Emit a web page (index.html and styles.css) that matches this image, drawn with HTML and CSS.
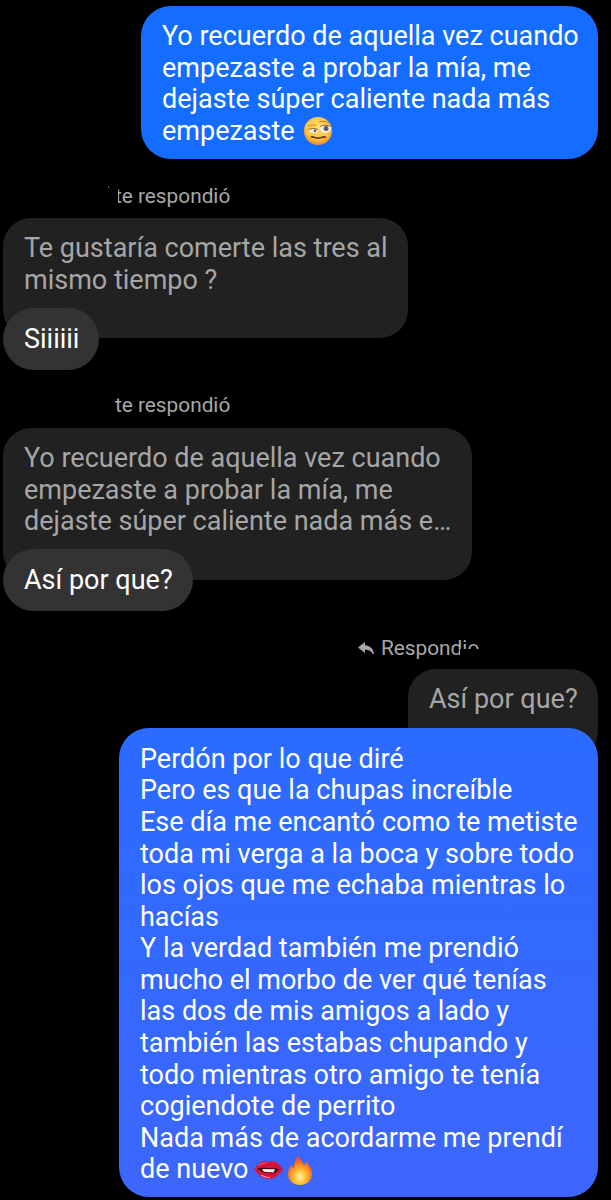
FILE: index.html
```html
<!DOCTYPE html>
<html lang="es">
<head>
<meta charset="UTF-8">
<meta name="viewport" content="width=device-width, initial-scale=1.0">
<title>Chat</title>
<link rel="stylesheet" href="styles.css">
</head>
<body>

<div class="chat">

    <!-- Sent message -->
    <div class="bubble sent first">
        Yo recuerdo de aquella vez cuando<br>
        empezaste a probar la mía, me<br>
        dejaste súper caliente nada más<br>
        empezaste
        <svg class="emoji woozy" viewBox="0 0 28 28">
            <defs>
                <radialGradient id="face" cx="50%" cy="38%" r="62%">
                    <stop offset="0" stop-color="#ffe070"/>
                    <stop offset="0.7" stop-color="#fdc143"/>
                    <stop offset="1" stop-color="#ee8a1e"/>
                </radialGradient>
            </defs>
            <circle cx="14" cy="14" r="14" fill="url(#face)"/>
            <path d="M4.500 9c2.500-1.200 5-1.200 7.500-.5" fill="none" stroke="#c07a28" stroke-width="1"/>
            <path d="M15 5c3.500-1.300 7-1 10 1" fill="none" stroke="#c07a28" stroke-width="1"/>
            <path d="M4.500 12.500c3-1.200 7-1.200 9.500 0 0 2-2 3.500-4.700 3.500s-4.800-1.500-4.800-3.500z" fill="#f4f1ea"/>
            <path d="M4.500 12.500c3-1.200 7-1.200 9.500 0" fill="none" stroke="#7a4d1e" stroke-width=".9"/>
            <circle cx="11" cy="13.800" r="1.300" fill="#6b5440"/>
            <path d="M16 9.500c3-1.500 8-1.500 11 0 .5 3.500-2 6.500-5.500 6.500S15.500 13 16 9.500z" fill="#f4f1ea"/>
            <path d="M16 9.500c3-1.500 8-1.500 11 0" fill="none" stroke="#7a4d1e" stroke-width=".8"/>
            <circle cx="22" cy="11.500" r="2.500" fill="#5d5d66"/>
            <path d="M7 20.200c2.500-1.300 4.500 1.400 7.500 1s4.500-2 7.500-1" fill="none" stroke="#6b3410" stroke-width="1.700"/>
        </svg>
    </div>

    <!-- Reply 1 -->
    <div class="reply-label left first-label"><span class="name-cut"></span>te respondió</div>
    <div class="quote left short">
        Te gustaría comerte las tres al<br>
        mismo tiempo ?
    </div>
    <div class="pill">Siiiiii</div>

    <!-- Reply 2 -->
    <div class="reply-label left">te respondió</div>
    <div class="quote left long">
        Yo recuerdo de aquella vez cuando<br>
        empezaste a probar la mía, me<br>
        dejaste súper caliente nada más e…
    </div>
    <div class="pill wide">Así por que?</div>

    <!-- Own reply -->
    <div class="reply-label right">
        <svg class="reply-icon" viewBox="0 0 16 12">
            <path d="M7 0L0 5.500 7 11V7.800c3.500 0 6 .8 7.700 4.200h1.300C15.500 7.500 12.500 3.800 7 3.300z" fill="#a8a8a8"/>
        </svg>
        <span class="clipped">Respondió<span class="word-cut"></span></span>
    </div>
    <div class="quote right own">Así por que?</div>
    <div class="bubble sent last">
        Perdón por lo que diré<br>
        Pero es que la chupas increíble<br>
        Ese día me encantó como te metiste<br>
        toda mi verga a la boca y sobre todo<br>
        los ojos que me echaba mientras lo<br>
        hacías<br>
        Y la verdad también me prendió<br>
        mucho el morbo de ver qué tenías<br>
        las dos de mis amigos a lado y<br>
        también las estabas chupando y<br>
        todo mientras otro amigo te tenía<br>
        cogiendote de perrito<br>
        Nada más de acordarme me prendí<br>
        de nuevo
        <svg class="emoji lips" viewBox="0 0 29 18">
            <path d="M0 8C4 3 8 0 11 0c1.500 0 2.500.8 3.500 1.300C15.500.8 16.500 0 18 0c4 0 8 3.500 11 8.500-1.500 2-3 3.500-4.500 5C21.500 16.500 18 18 14.500 18 8.500 18 3.500 13 0 8z" fill="#d5143a"/>
            <path d="M3 8c5-2 8-1 12-1s7-.5 11 1.500c-3 1-4 3.500-7 4.500-1.500-.5-3-1-5-1-4 0-8-2-11-4.500z" fill="#4d0a14"/>
            <path d="M8 8l13 .2-1.500 3.300L10 10.800z" fill="#f2efe9"/>
            <path d="M13 11.500c2-.8 5-.5 7 1-1.500 1.200-5 1.200-7-1z" fill="#b01030"/>
            <path d="M5 4.500C7.500 2.500 10 1.500 12 2" fill="none" stroke="#ff6d85" stroke-width="1"/>
            <path d="M7 14c3 2 6 2.800 9 2.500" fill="none" stroke="#ff8a9c" stroke-width="1.100"/>
        </svg><svg class="emoji fire" viewBox="0 0 24 29">
            <defs>
                <radialGradient id="flame" cx="50%" cy="72%" r="60%">
                    <stop offset="0" stop-color="#fff3a6"/>
                    <stop offset="0.42" stop-color="#ffbd32"/>
                    <stop offset="1" stop-color="#f2541c"/>
                </radialGradient>
            </defs>
            <path d="M10 0c3 3 4 6 6 9 1-1 1.500-2 1.500-3.500C21.500 9 24 13 24 18c0 6.500-5 11-12 11S0 24.500 0 18c0-4 1.500-6.500 3.500-9.500.3 1.800 1 3 2.200 3.800C5.500 8 7.500 4 10 0z" fill="url(#flame)"/>
        </svg>
    </div>

</div>

</body>
</html>
```

FILE: styles.css
```css
* {
    box-sizing: border-box;
    margin: 0;
    padding: 0;
}

body {
    background-color: #000;
    color: #fff;
    font-family: Roboto, "Noto Sans", sans-serif;
    font-size: 27px;
    line-height: 31.7px;
}

.chat {
    display: flex;
    flex-direction: column;
    padding: 6px 13px 3px 3px;
}

.bubble,
.quote,
.pill {
    white-space: nowrap;
}

.bubble {
    align-self: flex-end;
    padding: 15px 20px 11px 21px;
    border-radius: 30px;
    position: relative;
}

.first {
    width: 457px;
    background-color: #146dfe;
}

.last {
    width: 479px;
    line-height: 31.6px;
    padding-top: 16px;
    padding-bottom: 11px;
    background: linear-gradient(180deg, #2b6bff 0%, #3d66fb 100%);
}

.reply-label {
    font-size: 20.800px;
    line-height: 24px;
    color: #a8a8a8;
    margin-top: 23px;
    margin-bottom: 11px;
}

.reply-label.left {
    padding-left: 112px;
}

.first-label {
    position: relative;
    margin-top: 20px;
    margin-bottom: 10px;
}

/* what is left of the blanked-out name */
.first-label::before {
    content: "";
    position: absolute;
    left: 105px;
    top: 7px;
    width: 1px;
    height: 2px;
    background-color: #666;
}

.name-cut {
    display: inline-block;
    width: 3px;
    height: 24px;
    margin-right: -3px;
    background-color: #000;
    position: relative;
    z-index: 1;
}

.reply-label.right {
    align-self: flex-end;
    display: flex;
    align-items: center;
    gap: 7px;
    width: 240px;
    margin-top: 25px;
    margin-bottom: 9px;
}

.reply-icon {
    width: 16px;
    height: 12px;
}

.clipped {
    position: relative;
}

.word-cut {
    position: absolute;
    right: -2px;
    top: 13px;
    width: 21px;
    height: 12px;
    background-color: #000;
}

/* accent of the o is blanked too */
.clipped::after {
    content: "";
    position: absolute;
    right: 0;
    top: 0;
    width: 13px;
    height: 7px;
    background-color: #000;
}

.quote {
    background-color: #212121;
    color: #a6a6a6;
    padding: 15px 21px 42px;
    border-radius: 28px;
}

.short {
    width: 405px;
}

.long {
    width: 469px;
}

.own {
    align-self: flex-end;
    width: 190px;
    height: 91px;
    margin-bottom: -32px;
}

.pill {
    align-self: flex-start;
    background-color: #333;
    padding: 16px 20px 14px 21px;
    border-radius: 31px;
    margin-top: -30px;
    position: relative;
}

.wide {
    margin-top: -31px;
}

.emoji {
    display: inline-block;
    vertical-align: -5px;
}

.woozy {
    width: 28px;
    height: 28px;
    margin-left: 3px;
}

.lips {
    width: 29px;
    height: 18px;
    margin-left: -1px;
    vertical-align: -1px;
}

.fire {
    width: 24px;
    height: 29px;
    margin-left: 5px;
    vertical-align: -7px;
}
```
